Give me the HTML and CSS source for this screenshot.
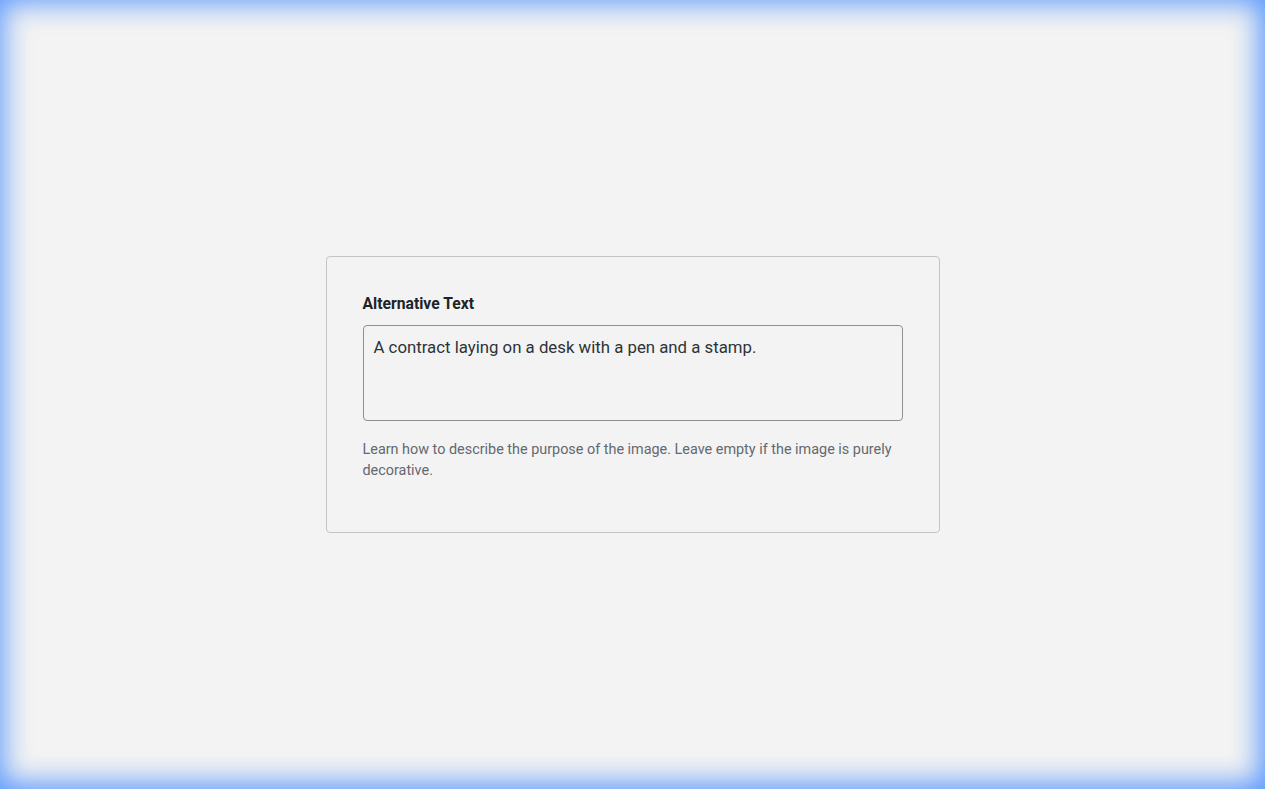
FILE: index.html
```html
<!DOCTYPE html>
<html lang="en">
<head>
<meta charset="utf-8">
<title>Alternative Text</title>
<link rel="stylesheet" href="styles.css">
</head>
<body>
<div class="stage">
  <div class="card">
    <label class="label" for="alt">Alternative Text</label>
    <textarea id="alt" class="field">A contract laying on a desk with a pen and a stamp.</textarea>
    <p class="help">Learn how to describe the purpose of the image. Leave empty if the image is purely decorative.</p>
  </div>
</div>
</body>
</html>
```
FILE: styles.css
```css
html, body {
  margin: 0;
  padding: 0;
  height: 100%;
}
body {
  background: #f3f3f3;
  font-family: Roboto, "Liberation Sans", sans-serif;
}
.stage {
  box-sizing: border-box;
  height: 100vh;
  display: flex;
  align-items: center;
  justify-content: center;
  box-shadow: inset -3px -3px 30px 0 rgba(77, 144, 254, 0.9), inset 2px 2px 30px 0 rgba(77, 144, 254, 0.45);
}
.card {
  box-sizing: border-box;
  width: 614px;
  height: 277px;
  border: 1px solid #c3c4c7;
  border-radius: 4px;
  background: #f3f3f3;
  padding: 37px 36px 0;
  display: flex;
  flex-direction: column;
}
.label {
  display: block;
  font-size: 15.7px;
  font-weight: 700;
  color: #1d2327;
  line-height: 20px;
  margin: 0 0 11px;
}
.field {
  box-sizing: border-box;
  width: 540px;
  height: 96px;
  border: 1px solid #8c8f94;
  border-radius: 4px;
  background: #f3f3f3;
  padding: 11px 10px;
  font-family: Roboto, "Liberation Sans", sans-serif;
  font-size: 16.8px;
  line-height: 20px;
  color: #2c3338;
  resize: none;
  outline: none;
  margin: 0;
}
.help {
  margin: 18px 0 0;
  font-size: 14.4px;
  line-height: 21px;
  color: #646970;
}
```
